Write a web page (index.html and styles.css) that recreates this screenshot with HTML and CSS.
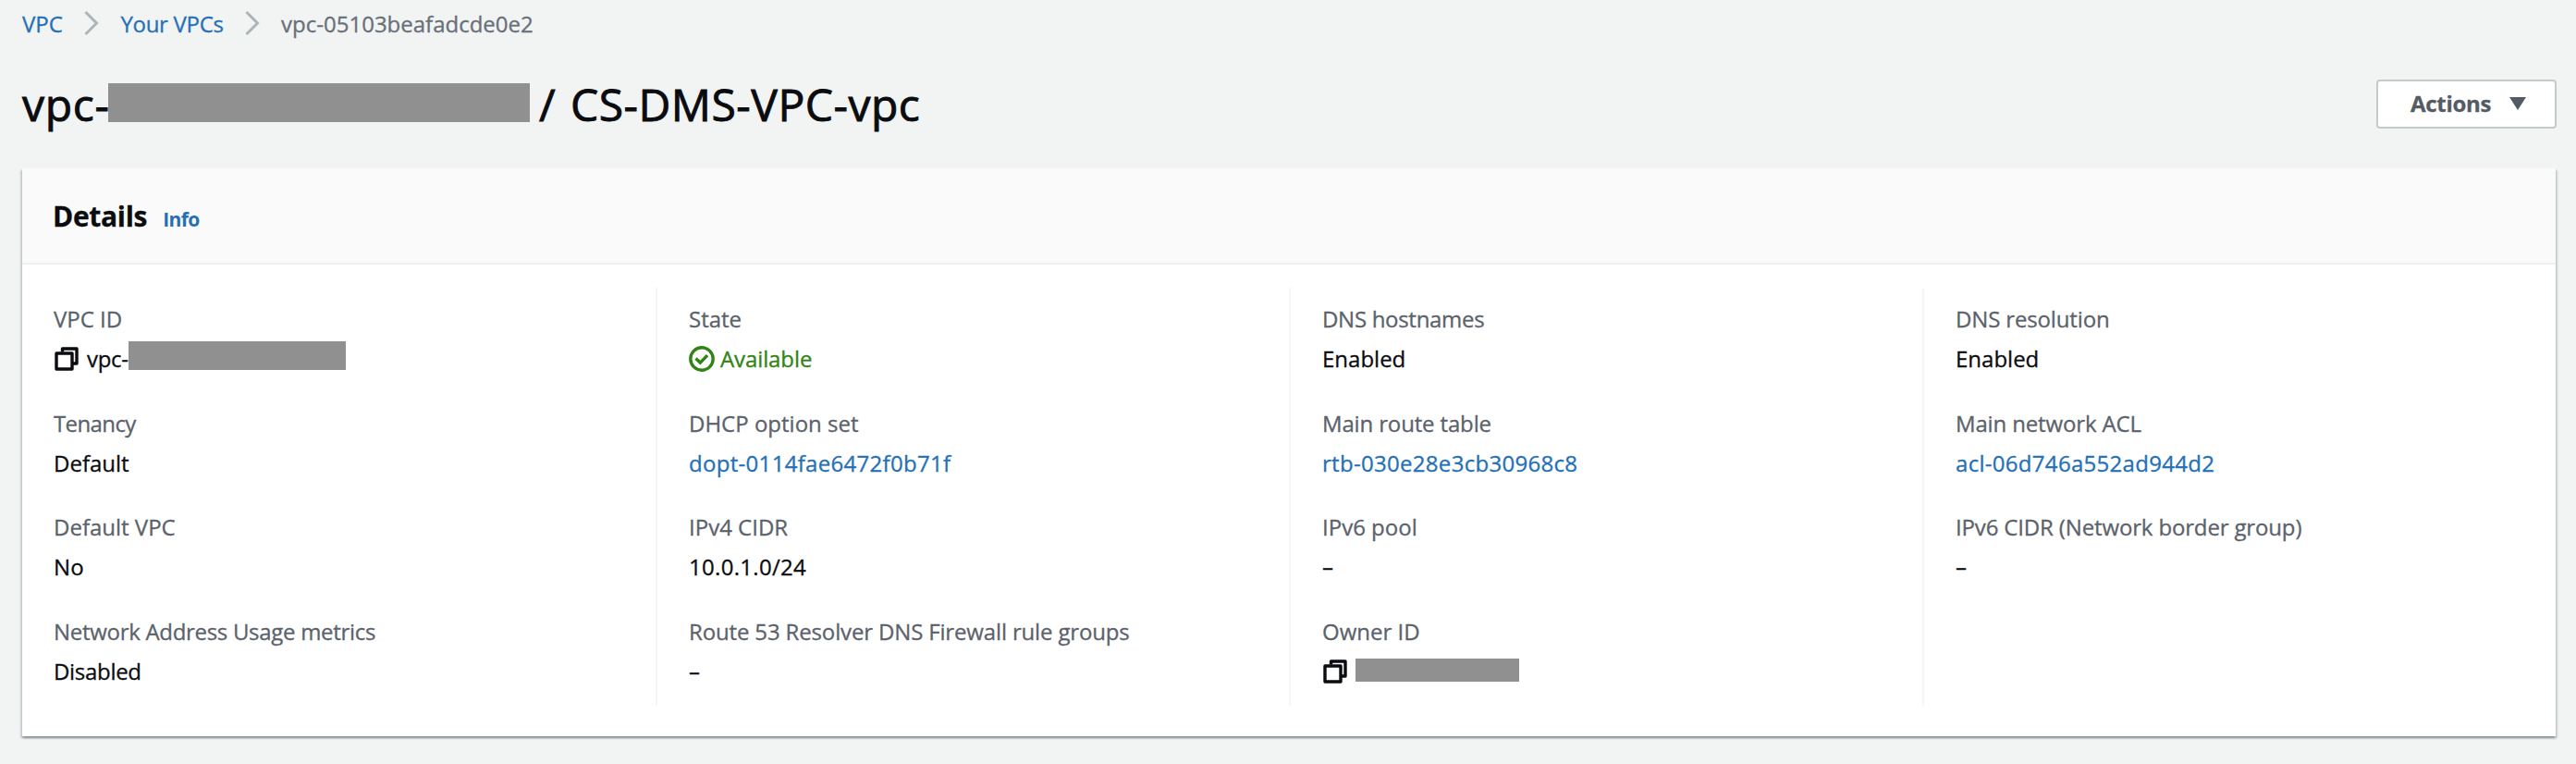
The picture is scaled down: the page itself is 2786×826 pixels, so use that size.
FILE: index.html
```
<!DOCTYPE html>
<html lang="en">
<head>
<meta charset="utf-8">
<title>VPC details</title>
<link rel="stylesheet" href="styles.css">
</head>
<body>
<svg class="sprite" aria-hidden="true">
  <symbol id="copy" viewBox="0 0 26 26">
    <path d="M8.500 5.500V2H24v16h-4.500" fill="none" stroke="currentColor" stroke-width="3.400" stroke-linejoin="round"/>
    <rect x="2" y="7" width="17" height="17" fill="none" stroke="currentColor" stroke-width="3.400" stroke-linejoin="round"/>
  </symbol>
  <symbol id="chevron" viewBox="0 0 16 28">
    <path d="M1.500 2l12 12-12 12" fill="none" stroke="currentColor" stroke-width="3"/>
  </symbol>
</svg>
<nav class="crumbs">
  <a class="link">VPC</a>
  <svg class="chevron"><use href="#chevron"/></svg>
  <a class="link tight">Your VPCs</a>
  <svg class="chevron"><use href="#chevron"/></svg>
  <span class="current">vpc-05103beafadcde0e2</span>
</nav>
<header class="head">
  <h1 class="title"><span class="prefix">vpc-</span><span class="mask mask-title"></span><span class="slash">/</span><span class="name">CS-DMS-VPC-vpc</span></h1>
  <button class="actions">Actions<svg class="caret" viewBox="0 0 20 16"><path d="M1 1h18l-9 14z" fill="currentColor"/></svg></button>
</header>
<section class="card">
  <div class="card-head"><h2 class="card-title">Details</h2><a class="link info">Info</a></div>
  <div class="grid">
    <dl class="col">
      <div class="item"><dt class="label">VPC ID</dt><dd class="value"><svg class="copy"><use href="#copy"/></svg><span class="id-prefix">vpc-</span><span class="mask mask-id"></span></dd></div>
      <div class="item"><dt class="label tighter">Tenancy</dt><dd class="value">Default</dd></div>
      <div class="item"><dt class="label">Default VPC</dt><dd class="value loose">No</dd></div>
      <div class="item"><dt class="label tight">Network Address Usage metrics</dt><dd class="value tight">Disabled</dd></div>
    </dl>
    <dl class="col">
      <div class="item"><dt class="label">State</dt><dd class="value ok"><svg class="check" viewBox="0 0 28 28"><g fill="none" stroke="currentColor" stroke-width="3.400"><circle cx="14" cy="14" r="12.200"/><path d="M7.500 13.500l4.800 4.600 7.800-8"/></g></svg><span>Available</span></dd></div>
      <div class="item"><dt class="label">DHCP option set</dt><dd class="value loose"><a class="link">dopt-0114fae6472f0b71f</a></dd></div>
      <div class="item"><dt class="label">IPv4 CIDR</dt><dd class="value loose">10.0.1.0/24</dd></div>
      <div class="item"><dt class="label narrow">Route 53 Resolver DNS Firewall rule groups</dt><dd class="value">–</dd></div>
    </dl>
    <dl class="col">
      <div class="item"><dt class="label tight">DNS hostnames</dt><dd class="value">Enabled</dd></div>
      <div class="item"><dt class="label narrow">Main route table</dt><dd class="value loose"><a class="link">rtb-030e28e3cb30968c8</a></dd></div>
      <div class="item"><dt class="label">IPv6 pool</dt><dd class="value">–</dd></div>
      <div class="item"><dt class="label">Owner ID</dt><dd class="value"><svg class="copy"><use href="#copy"/></svg><span class="mask mask-owner"></span></dd></div>
    </dl>
    <dl class="col">
      <div class="item"><dt class="label narrow">DNS resolution</dt><dd class="value">Enabled</dd></div>
      <div class="item"><dt class="label narrow">Main network ACL</dt><dd class="value loose"><a class="link">acl-06d746a552ad944d2</a></dd></div>
      <div class="item"><dt class="label narrow">IPv6 CIDR (Network border group)</dt><dd class="value">–</dd></div>
    </dl>
  </div>
</section>
</body>
</html>
```
FILE: styles.css
```
* { box-sizing: border-box; }
body {
  margin: 0;
  padding: 9px 22px 0 24px;
  min-height: 826px;
  background: #f2f3f3;
  color: #0b0c0f;
  font: 24px "Open Sans", "Noto Sans", sans-serif;
  -webkit-text-stroke: 0.3px currentColor;
}
h1, h2, dl, dd { margin: 0; }
.sprite { display: none; }
.link { color: #2470b8; }
.mask { flex: none; background: #909090; }

.crumbs { display: flex; align-items: center; height: 34px; line-height: 34px; }
.chevron { width: 16px; height: 28px; margin: -2px 23px 0 23.5px; color: #aab7b8; }
.current { color: #687078; }

.head { display: flex; justify-content: space-between; align-items: center; height: 60px; margin-top: 39px; }
.title { display: flex; height: 60px; font-size: 48px; font-weight: 400; line-height: 62px; -webkit-text-stroke-width: 0.9px; }
.prefix { width: 93px; letter-spacing: 0.7px; }
.mask-title { width: 456px; height: 42px; margin-top: 8px; }
.slash { width: 44px; padding-left: 10px; }
.name { letter-spacing: 0.5px; }
.actions {
  display: flex;
  align-items: center;
  width: 195px;
  height: 53px;
  margin-right: -1px;
  padding: 0 0 1px 35px;
  border: 2px solid #c6c9cb;
  border-radius: 4px;
  background: #fff;
  color: #545b64;
  font: 700 24px "Open Sans", "Noto Sans", sans-serif;
  letter-spacing: -0.3px;
}
.caret { width: 20px; height: 16px; margin-left: 19px; }

.card {
  height: 614px;
  margin-top: 40px;
  background: #fff;
  box-shadow: 0 2px 2px 0 rgba(0, 28, 36, 0.3), 2px 2px 2px 0 rgba(0, 28, 36, 0.12), -2px 2px 2px 0 rgba(0, 28, 36, 0.12);
}
.card-head {
  display: flex;
  align-items: baseline;
  height: 104px;
  padding: 32px 33px 0;
  border-bottom: 2px solid #eff1f1;
  background: #fafafa;
}
.card-title { font-size: 30px; font-weight: 700; line-height: 40px; letter-spacing: -0.3px; }
.info { margin-left: 17px; font-size: 21px; font-weight: 700; letter-spacing: -0.6px; -webkit-text-stroke-width: 0; }

.grid { display: grid; grid-template-columns: repeat(4, 1fr); padding-top: 25px; }
.col { height: 452px; padding: 12px 0 0 34px; }
.col + .col { border-left: 2px solid #f5f6f6; }
.item { height: 112.5px; }
.label, .value { height: 43.25px; line-height: 44px; white-space: nowrap; }
.label { color: #5b626b; }
.value { display: flex; }
.narrow { letter-spacing: -0.15px; }
.tight { letter-spacing: -0.3px; }
.tighter { letter-spacing: -0.6px; }
.loose { letter-spacing: 0.3px; }
.ok { color: #2f8413; letter-spacing: -0.1px; }
.check { width: 28px; height: 28px; margin: 8px 6px 0 0; }
.copy { width: 26px; height: 26px; margin: 9px 9px 0 1px; }
.id-prefix { width: 45px; letter-spacing: -0.3px; }
.mask-id { width: 235px; height: 31px; margin-top: 3px; }
.mask-owner { width: 177px; height: 25px; margin-top: 8px; }
```
